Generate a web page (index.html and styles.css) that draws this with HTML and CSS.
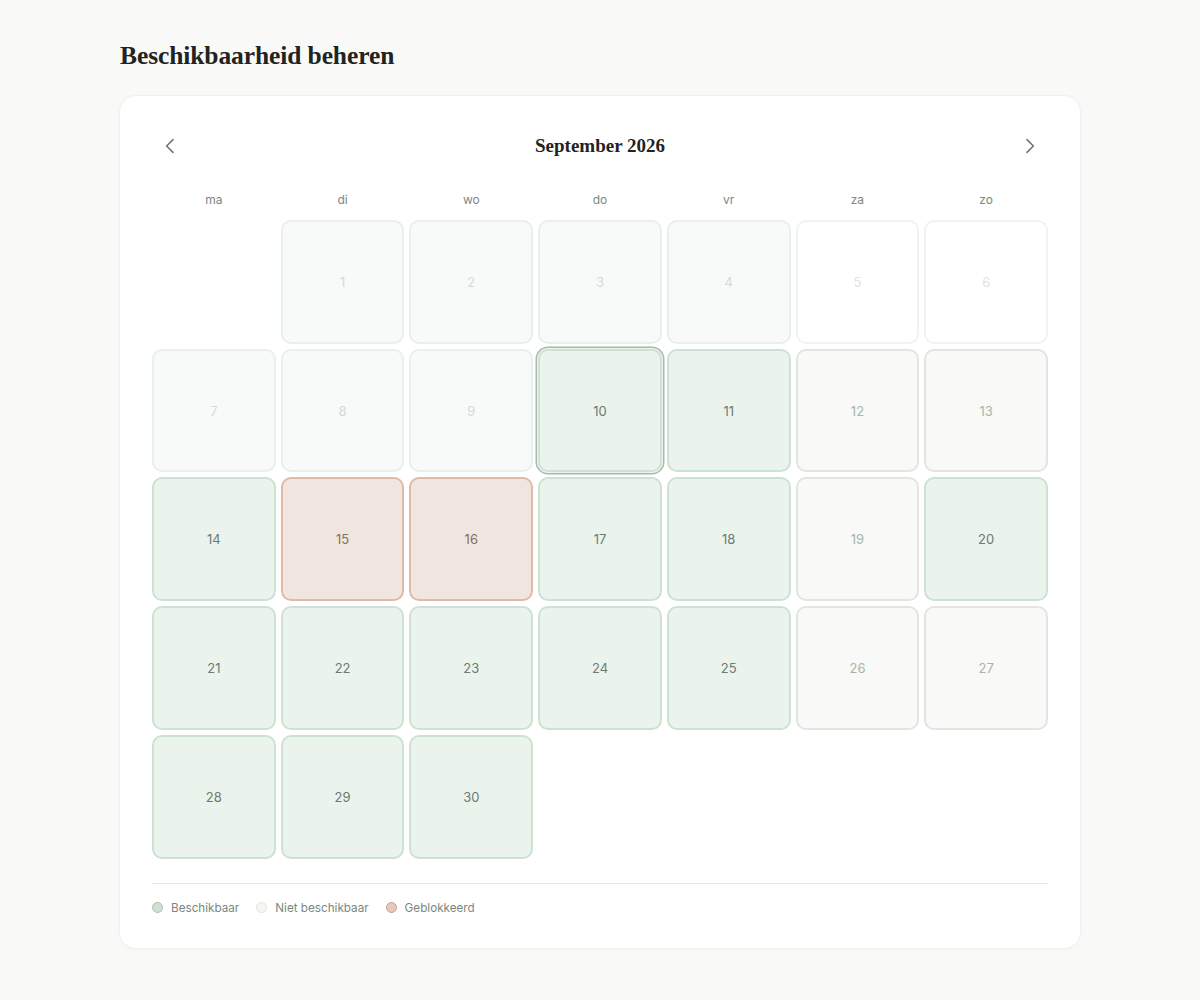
FILE: index.html
```html
<!DOCTYPE html>
<html lang="nl">
<head>
  <meta charset="UTF-8">
  <meta name="viewport" content="width=device-width, initial-scale=1.0">
  <title>Beschikbaarheid beheren</title>
  <link rel="stylesheet" href="styles.css">
</head>
<body>
  <div class="page">
    <h1 class="page-title">Beschikbaarheid beheren</h1>
    <div class="card">
      <div class="cal-header">
        <button class="nav-btn" aria-label="Vorige maand">
          <svg width="16" height="16" viewBox="0 0 16 16" fill="none"><path d="M11 1.6 4.6 8l6.4 6.4" stroke="#66766d" stroke-width="1.5" stroke-linecap="round" stroke-linejoin="round"/></svg>
        </button>
        <div class="month">September 2026</div>
        <button class="nav-btn" aria-label="Volgende maand">
          <svg width="16" height="16" viewBox="0 0 16 16" fill="none"><path d="M5 1.6 11.4 8 5 14.4" stroke="#66766d" stroke-width="1.5" stroke-linecap="round" stroke-linejoin="round"/></svg>
        </button>
      </div>
      <div class="weekdays">
        <div>ma</div><div>di</div><div>wo</div><div>do</div><div>vr</div><div>za</div><div>zo</div>
      </div>
      <div class="days">
        <div class="day empty"></div>
        <div class="day past">1</div>
        <div class="day past">2</div>
        <div class="day past">3</div>
        <div class="day past">4</div>
        <div class="day past weekend">5</div>
        <div class="day past weekend">6</div>

        <div class="day past">7</div>
        <div class="day past">8</div>
        <div class="day past">9</div>
        <div class="day available today">10</div>
        <div class="day available">11</div>
        <div class="day unavailable">12</div>
        <div class="day unavailable">13</div>

        <div class="day available">14</div>
        <div class="day blocked">15</div>
        <div class="day blocked">16</div>
        <div class="day available">17</div>
        <div class="day available">18</div>
        <div class="day unavailable">19</div>
        <div class="day available">20</div>

        <div class="day available">21</div>
        <div class="day available">22</div>
        <div class="day available">23</div>
        <div class="day available">24</div>
        <div class="day available">25</div>
        <div class="day unavailable">26</div>
        <div class="day unavailable">27</div>

        <div class="day available">28</div>
        <div class="day available">29</div>
        <div class="day available">30</div>
      </div>
      <div class="legend">
        <div class="legend-item"><span class="dot dot-available"></span>Beschikbaar</div>
        <div class="legend-item"><span class="dot dot-unavailable"></span>Niet beschikbaar</div>
        <div class="legend-item"><span class="dot dot-blocked"></span>Geblokkeerd</div>
      </div>
    </div>
  </div>
</body>
</html>
```

FILE: styles.css
```css
body {
  margin: 0;
  background: #f9f9f7;
  font-family: 'Inter', 'Noto Sans', Arial, sans-serif;
  color: #2b302d;
}
.page {
  width: 960px;
  margin: 0 auto;
  padding: 40px 0 52px 0;
}
.page-title {
  margin: 0 0 24px 0;
  font-family: 'Liberation Serif', 'Times New Roman', serif;
  font-weight: bold;
  font-size: 25.5px;
  line-height: 32px;
  color: #1f2421;
  letter-spacing: -0.1px;
}
.card {
  background: #fff;
  border-radius: 16px;
  box-shadow: 0 0 0 1px #f0f2ee, 0 1px 4px rgba(0,0,0,0.03);
  padding: 32px;
}
.cal-header {
  display: flex;
  align-items: center;
  justify-content: space-between;
  height: 36px;
  margin-bottom: 28px;
}
.nav-btn {
  width: 36px;
  height: 36px;
  border: none;
  background: none;
  padding: 0;
  display: flex;
  align-items: center;
  justify-content: center;
  cursor: pointer;
  border-radius: 8px;
}
.month {
  font-family: 'Liberation Serif', 'Times New Roman', serif;
  font-weight: bold;
  font-size: 19px;
  color: #1f2421;
}
.weekdays {
  display: grid;
  grid-template-columns: repeat(7, 1fr);
  gap: 5px;
  margin-bottom: 12px;
}
.weekdays div {
  text-align: center;
  font-size: 12px;
  line-height: 16px;
  color: #7b877f;
}
.days {
  display: grid;
  grid-template-columns: repeat(7, 1fr);
  gap: 5px;
}
.day {
  aspect-ratio: 1;
  box-sizing: border-box;
  border-radius: 10px;
  border: 2px solid transparent;
  display: flex;
  align-items: center;
  justify-content: center;
  font-size: 13px;
  color: #6f7c74;
}
.day.empty {
  border: none;
}
.day.past {
  background: #f8faf9;
  border-color: #e7f0ea;
  color: #d3dbd6;
}
.day.past.weekend {
  background: #fff;
  border-color: #f1f3f1;
  color: #dfe4e1;
}
.day.available {
  background: #eaf4ec;
  border-color: #cde2d2;
  color: #6c7a71;
}
.day.today {
  box-shadow: 0 0 0 1px #eef5ef, 0 0 0 2.5px #a9b8ae;
}
.day.unavailable {
  background: #f9f9f7;
  border-color: #e3e5e0;
  color: #a5b6ab;
}
.day.blocked {
  background: #f1e5e0;
  border-color: #dfbaa9;
  color: #80705f;
}
.legend {
  margin-top: 24px;
  border-top: 1px solid #e6e8e4;
  padding-top: 16px;
  display: flex;
  gap: 17px;
}
.legend-item {
  display: flex;
  align-items: center;
  gap: 8px;
  font-size: 11.7px;
  line-height: 16px;
  color: #7a887f;
}
.dot {
  width: 9px;
  height: 9px;
  border-radius: 50%;
  border: 1px solid transparent;
}
.dot-available {
  background: #cfe0d3;
  border-color: #a8c2b0;
}
.dot-unavailable {
  background: #f6f7f3;
  border-color: #e1e4dc;
}
.dot-blocked {
  background: #e8c9b9;
  border-color: #c9a08c;
}
```
